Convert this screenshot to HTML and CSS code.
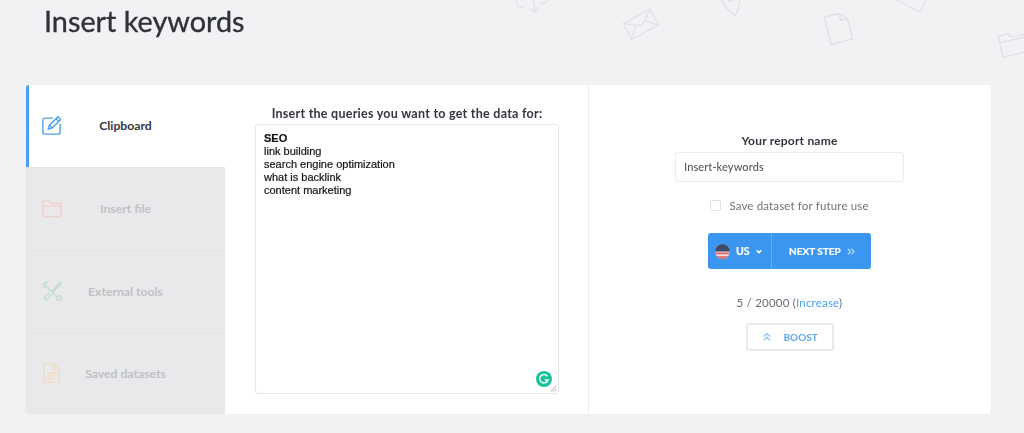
FILE: index.html
```html
<!DOCTYPE html>
<html lang="en">
<head>
<meta charset="utf-8">
<title>Insert keywords</title>
<link rel="stylesheet" href="styles.css">
</head>
<body>
<div class="bg-icons" aria-hidden="true">
  <svg class="deco deco-cloud" viewBox="0 0 40 30"><path d="M8 16a7 7 0 0 1-2-14h26a6 6 0 0 1 1 14H26M20 8v17M15 20l5 5 5-5"/></svg>
  <svg class="deco deco-mail" viewBox="0 0 38 30"><path d="M2 6h34v20H2zM2 6l17 12L36 6M2 26l12-12M36 26L24 14"/></svg>
  <svg class="deco deco-pin" viewBox="0 0 24 34"><path d="M12 32C6 24 2 18 2 12a10 10 0 0 1 20 0c0 6-4 12-10 20z"/><circle cx="12" cy="11" r="4"/></svg>
  <svg class="deco deco-file" viewBox="0 0 26 32"><path d="M2 2h15l7 7v21H2zM17 2v7h7"/></svg>
  <svg class="deco deco-mail2" viewBox="0 0 38 30"><path d="M2 2h34v24H2z"/></svg>
  <svg class="deco deco-folder" viewBox="0 0 36 28"><path d="M2 26V3h11l3 4h18v19zM2 10h32"/></svg>
</div>
<h1 class="title">Insert keywords</h1>
<main class="card">
  <nav class="side">
    <a class="tab active">
      <svg class="tab-icon" viewBox="0 0 22 22"><path class="blue" d="M12 3.500H3a2 2 0 0 0-2 2V19a2 2 0 0 0 2 2h15a2 2 0 0 0 2-2V10M7 15.500l1-4L17.500 2l3 3-9.500 9.500zM15.500 4l3 3M8 11.500l3.500 3"/></svg>
      <span class="tab-label">Clipboard</span>
    </a>
    <a class="tab">
      <svg class="tab-icon" viewBox="0 0 22 22"><path class="red" d="M1 19V3.500h6.500l2 2.500H21v13.500a1 1 0 0 1-1 1H2a1 1 0 0 1-1-1.500zM1 9h20"/></svg>
      <span class="tab-label">Insert file</span>
    </a>
    <a class="tab">
      <svg class="tab-icon" viewBox="0 0 22 22"><path class="green" d="M6 1 3.500 3.500 5 6l-3 1 -1-3 3-3zM5 6l12 12M17 18l-1 2.500 3 1 2.500-2.500-1-3-2.500.5zM20 1.500l1 1-9 10-1-1zM9 13.500l-6 4a2.500 2.500 0 0 0 2 3.500l6-6"/></svg>
      <span class="tab-label">External tools</span>
    </a>
    <a class="tab">
      <svg class="tab-icon" viewBox="0 0 22 22"><path class="orange" d="M3 1h10l6 6v13a1 1 0 0 1-1 1H3a1 1 0 0 1-1-1V2a1 1 0 0 1 1-1zM13 1v6h6M6 11h10M6 14h10M6 17h6"/></svg>
      <span class="tab-label">Saved datasets</span>
    </a>
  </nav>
  <section class="queries">
    <h2 class="queries-title">Insert the queries you want to get the data for:</h2>
    <div class="area">
      <div class="area-text"><div class="strong">SEO</div><div>link building</div><div>search engine optimization</div><div>what is backlink</div><div>content marketing</div></div>
      <svg class="grammarly" viewBox="0 0 16 16"><circle cx="8" cy="8" r="8" fill="#15c39a"/><path d="M11.300 5.200A4.200 4.200 0 1 0 12 9H8.800" fill="none" stroke="#fff" stroke-width="1.500"/></svg>
      <svg class="resize" viewBox="0 0 8 8"><path d="M1 7.500 7.500 1M4.500 7.500l3-3" stroke="#8f8f8f" fill="none"/></svg>
    </div>
  </section>
  <section class="report">
    <div class="report-name">Your report name</div>
    <div class="name-input">Insert-keywords</div>
    <label class="save"><span class="check"></span><span>Save dataset for future use</span></label>
    <div class="cta">
      <div class="cta-country">
        <svg class="flag" viewBox="0 0 16 16"><defs><clipPath id="flag-clip"><circle cx="8" cy="8" r="8"/></clipPath></defs><g clip-path="url(#flag-clip)"><rect width="16" height="16" fill="#f3dede"/><rect y="9" width="16" height="2" fill="#d96b6b"/><rect y="13" width="16" height="3" fill="#d96b6b"/><rect width="16" height="8" fill="#3d4a6b"/></g></svg>
        <span>US</span>
        <svg class="caret" viewBox="0 0 8 6"><path d="M1 1.500 4 4.500 7 1.500"/></svg>
      </div>
      <div class="cta-next">
        <span>NEXT STEP</span>
        <svg class="chev" viewBox="0 0 10 8"><path d="M1 .5 4.500 4 1 7.500M5.500 .5 9 4 5.500 7.500"/></svg>
      </div>
    </div>
    <div class="usage">5 / 20000 (<span class="link">Increase</span>)</div>
    <div class="boost">
      <svg class="boost-icon" viewBox="0 0 10 10"><path d="M1 4.500 5 1l4 3.500M1 9l4-3.500L9 9"/></svg>
      <span>BOOST</span>
    </div>
  </section>
</main>
</body>
</html>
```

FILE: styles.css
```css
* { box-sizing: border-box; }
html, body { height: 100%; }
body {
  margin: 0;
  height: 433px;
  overflow: hidden;
  background: #f2f2f5;
  color: #33363f;
  font-family: Lato, "Liberation Sans", sans-serif;
  position: relative;
  padding: 2px 33px 0 26px;
}
.title {
  margin: 0 0 0 18px;
  height: 83px;
  font-size: 28.800px;
  line-height: 38px;
  font-weight: 400;
  -webkit-text-stroke: .35px #2f323a;
  color: #2f323a;
  filter: blur(.35px);
}
.bg-icons { position: absolute; inset: 0; pointer-events: none; filter: blur(.35px); }
.deco {
  position: absolute;
  fill: none;
  stroke: #e2e2e6;
  stroke-width: 1.500;
}
.deco-cloud { left: 517px; top: -10px; width: 34px; height: 28px; transform: rotate(-12deg); }
.deco-mail { left: 623px; top: 10px; width: 35px; height: 27px; transform: rotate(-28deg); }
.deco-pin { left: 721px; top: -14px; width: 22px; height: 33px; transform: rotate(-14deg); }
.deco-file { left: 825px; top: 12px; width: 27px; height: 32px; transform: rotate(-14deg); }
.deco-mail2 { left: 895px; top: -14px; width: 34px; height: 24px; transform: rotate(28deg); }
.deco-folder { left: 998px; top: 30px; width: 34px; height: 26px; transform: rotate(-13deg); }

.card {
  position: relative;
  display: flex;
  height: 329px;
  background: #fff;
  border-radius: 3px;
  box-shadow: 0 0 2px rgba(0, 0, 0, .05);
  overflow: hidden;
  filter: blur(.35px);
}
.side {
  width: 199px;
  flex: none;
  display: grid;
  grid-template-rows: 82px 83px 83px 81px;
}
.tab {
  display: flex;
  align-items: center;
  justify-content: center;
  position: relative;
  padding-bottom: 1px;
  background: #e9e9eb;
  border-top: 1px solid #e3e3e6;
  font-size: 12.200px;
  font-weight: 700;
  color: #bfc0c5;
}
.tab.active {
  background: #fff;
  border-top: 0;
  border-left: 3px solid #4a9ff0;
  color: #33363f;
}
.tab.active .tab-label { margin-left: -3px; }
.tab-icon {
  position: absolute;
  left: 16px;
  top: 50%;
  margin-top: -11px;
  width: 20px;
  height: 20px;
  fill: none;
  stroke-width: 1.500;
}
.tab.active .tab-icon { left: 13px; }
.blue { stroke: #4a9ff0; }
.red { stroke: #f2cfcd; }
.green { stroke: #bfdfd2; }
.orange { stroke: #f1dcc0; }

.queries {
  flex: none;
  width: 304px;
  box-sizing: content-box;
  padding: 22px 29px 20px 30px;
  display: flex;
  flex-direction: column;
  border-right: 1px solid #ececee;
}
.queries-title {
  margin: 0 0 3px;
  height: 14px;
  font-size: 12.500px;
  line-height: 14px;
  font-weight: 700;
  text-align: center;
  color: #33363f;
  white-space: nowrap;
  letter-spacing: .26px;
}
.area {
  position: relative;
  height: 270px;
  border: 1px solid #e6e6e9;
  border-radius: 3px;
  padding: 7px 8px;
  font-family: "Liberation Sans", Arial, sans-serif;
  font-size: 11px;
  line-height: 13px;
  color: #111317;
  -webkit-text-stroke: .2px #111317;
}
.strong { font-weight: 700; }
.grammarly { position: absolute; right: 6px; bottom: 6px; width: 16px; height: 16px; }
.resize { position: absolute; right: 1px; bottom: 1px; width: 7px; height: 7px; }

.report {
  flex: 1;
  display: flex;
  flex-direction: column;
  align-items: center;
  padding: 48px 1px 0 0;
}
.report-name {
  font-size: 12px;
  line-height: 15px;
  font-weight: 700;
  color: #33363f;
  letter-spacing: .2px;
}
.name-input {
  width: 229px;
  height: 30px;
  margin-top: 4px;
  padding: 0 8px;
  border: 1px solid #ebebee;
  border-radius: 3px;
  font-size: 11px;
  line-height: 28px;
  font-weight: 500;
  color: #55575e;
  letter-spacing: .1px;
}
.save {
  display: flex;
  align-items: center;
  gap: 8px;
  margin-top: 15px;
  height: 16px;
  font-size: 11.500px;
  color: #6f7177;
  letter-spacing: .15px;
}
.check {
  width: 11px;
  height: 11px;
  border: 1px solid #e0e0e3;
  border-radius: 2px;
}
.cta {
  display: flex;
  width: 163px;
  height: 36px;
  margin-top: 20px;
  background: #3a96ee;
  border-radius: 3px;
  color: #fff;
  font-size: 10px;
  font-weight: 700;
  -webkit-text-stroke: .2px #fff;
}
.cta-country {
  width: 64px;
  display: flex;
  align-items: center;
  padding-left: 7px;
  gap: 6px;
  font-size: 10.500px;
  border-right: 1px solid #6cb0f2;
}
.flag { width: 15px; height: 15px; }
.caret { width: 6px; height: 5px; fill: none; stroke: #fff; stroke-width: 2; }
.cta-next {
  flex: 1;
  display: flex;
  align-items: center;
  padding-left: 17px;
  gap: 6px;
}
.chev { width: 8px; height: 7px; fill: none; stroke: #b9dbfa; stroke-width: 1.500; }
.usage {
  margin-top: 27px;
  font-size: 11.500px;
  line-height: 14px;
  color: #6a6c72;
  letter-spacing: .2px;
}
.link { color: #4a9ff0; }
.boost {
  display: flex;
  align-items: center;
  justify-content: flex-start;
  gap: 13px;
  width: 88px;
  height: 28px;
  margin-top: 13px;
  padding-left: 15px;
  border: 2px solid #e8e8ea;
  border-radius: 3px;
  font-size: 10px;
  font-weight: 700;
  color: #62a9f0;
}
.boost-icon { width: 8px; height: 8px; fill: none; stroke: #8cc0f4; stroke-width: 1.600; }
```
